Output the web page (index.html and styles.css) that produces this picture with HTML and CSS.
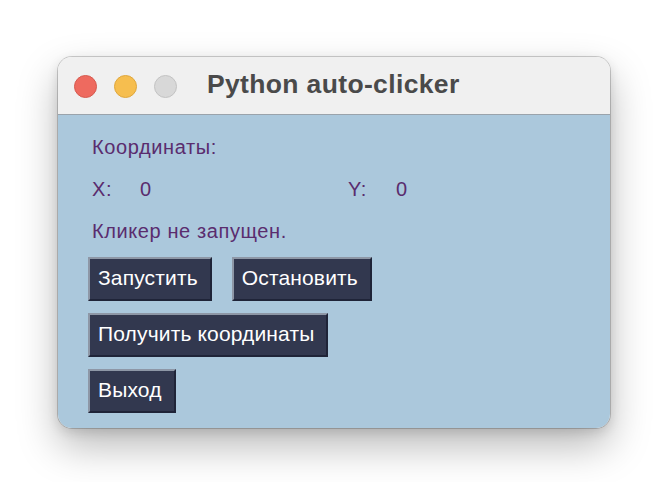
FILE: index.html
```html
<!DOCTYPE html>
<html lang="ru">
<head>
<meta charset="utf-8">
<title>Python auto-clicker</title>
<link rel="stylesheet" href="styles.css">
</head>
<body>
<div class="window">
  <div class="titlebar">
    <div class="lights">
      <span class="light red"></span>
      <span class="light yellow"></span>
      <span class="light gray"></span>
    </div>
    <div class="title">Python auto-clicker</div>
  </div>
  <div class="content">
    <div class="label row-coords">Координаты:</div>
    <div class="xy">
      <span class="label">X:</span>
      <span class="label">0</span>
      <span class="label">Y:</span>
      <span class="label">0</span>
    </div>
    <div class="label row-status">Кликер не запущен.</div>
    <div class="buttons">
      <div class="btn-row">
        <button class="btn">Запустить</button>
        <button class="btn">Остановить</button>
      </div>
      <div class="btn-row">
        <button class="btn">Получить координаты</button>
      </div>
      <div class="btn-row">
        <button class="btn">Выход</button>
      </div>
    </div>
  </div>
</div>
</body>
</html>
```

FILE: styles.css
```css
html, body {
  margin: 0;
  padding: 0;
  background: #ffffff;
}
body {
  width: 668px;
  height: 482px;
  overflow: hidden;
  padding-top: 57px;
  padding-left: 58px;
  box-sizing: border-box;
  font-family: "Liberation Sans", Arial, sans-serif;
}
.window {
  width: 552px;
  height: 371px;
  border-radius: 14px;
  overflow: hidden;
  display: flex;
  flex-direction: column;
  box-shadow: 0 0 0 1px rgba(0,0,0,0.18), 0 18px 40px rgba(0,0,0,0.28), 0 4px 12px rgba(0,0,0,0.12);
}
.titlebar {
  height: 58px;
  flex: none;
  background: #f0f0f0;
  border-bottom: 1px solid #9aa3ab;
  box-sizing: border-box;
  display: flex;
  align-items: center;
}
.lights {
  display: flex;
  gap: 17px;
  padding-left: 16px;
  padding-top: 1px;
}
.light {
  width: 23px;
  height: 23px;
  border-radius: 50%;
  box-sizing: border-box;
}
.red { background: #ee6a5f; border: 1px solid #d65a4f; }
.yellow { background: #f6be4f; border: 1px solid #dfa73d; }
.gray { background: #d8d8d8; border: 1px solid #c3c3c3; }
.title {
  margin-left: 30px;
  font-weight: bold;
  font-size: 26.5px;
  letter-spacing: 0.35px;
  color: #4a4a4a;
  padding-bottom: 2px;
}
.content {
  flex: 1;
  background: #abc8dc;
  padding: 21px 0 0 30px;
}
.label {
  color: #5a2c6e;
  font-size: 20px;
  letter-spacing: 0.6px;
  line-height: 22px;
  padding-left: 4px;
}
.xy {
  display: grid;
  grid-template-columns: 48px 208px 48px auto;
  margin-top: 20px;
}
.row-status {
  margin-top: 20px;
}
.buttons {
  display: flex;
  flex-direction: column;
  gap: 12px;
  margin-top: 15px;
}
.btn-row {
  display: flex;
  gap: 20px;
}
.btn {
  height: 44px;
  margin: 0;
  padding: 0 12px 2px 8px;
  background: #32384f;
  color: #ffffff;
  font-family: "Liberation Sans", Arial, sans-serif;
  font-size: 21px;
  letter-spacing: 0.15px;
  border-style: solid;
  border-width: 2px;
  border-color: #8e97a6 #1f2438 #1f2438 #8e97a6;
  border-radius: 0;
}
```
